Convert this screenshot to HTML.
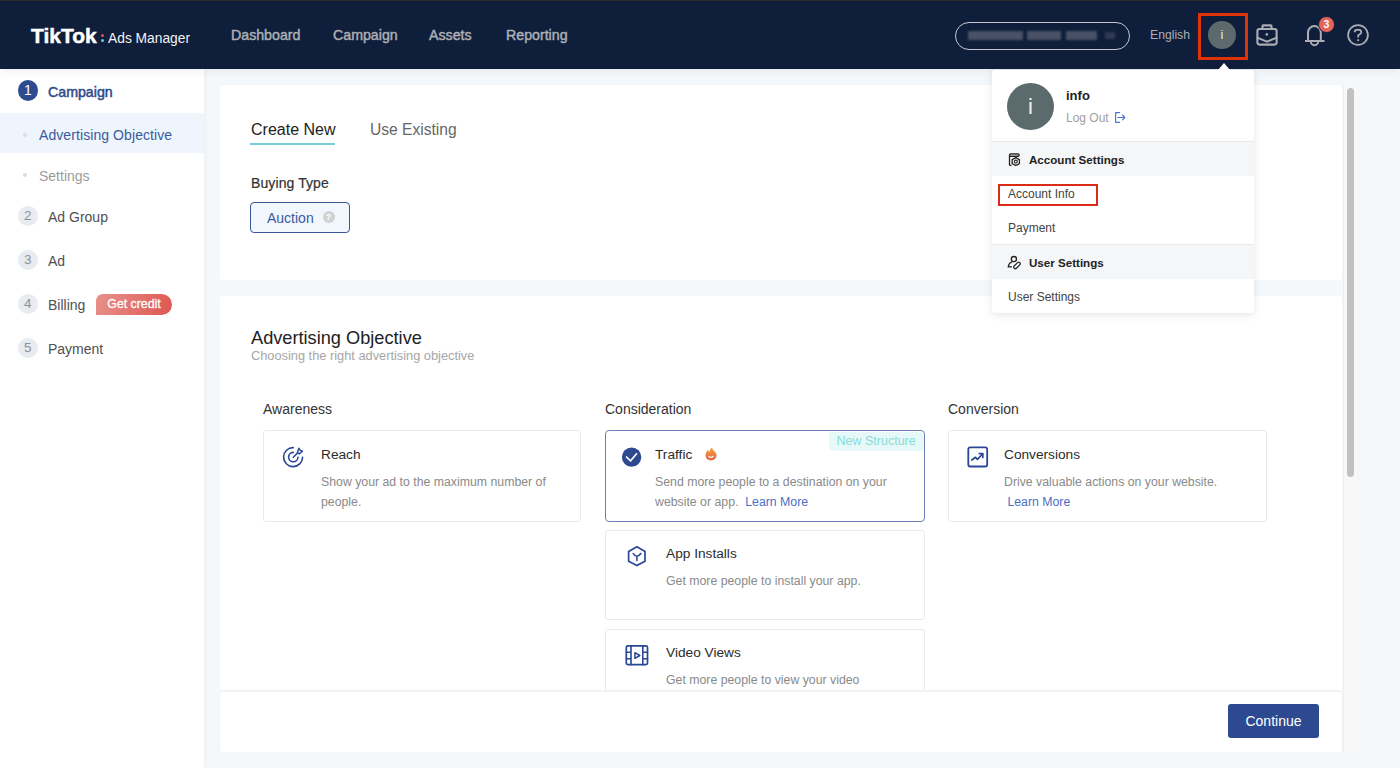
<!DOCTYPE html>
<html><head><meta charset="utf-8">
<style>
*{box-sizing:border-box;margin:0;padding:0}
html,body{width:1400px;height:768px;overflow:hidden}
body{font-family:"Liberation Sans",sans-serif;background:#f5f8fb;position:relative;color:#222}
.abs{position:absolute;white-space:nowrap}
#hdr{position:absolute;left:0;top:0;width:1400px;height:69px;background:#0f1e3b;border-top:1px solid #2b2b2b;z-index:5;box-shadow:0 2px 8px rgba(0,0,0,0.07)}
.logo{left:31px;top:23px;color:#fff;font-weight:bold;font-size:21px;letter-spacing:0px;-webkit-text-stroke:0.5px #fff}
.logo2{left:108px;top:30px;color:#f2f2f2;font-size:13.8px}
.nav{top:26px;color:#acafb5;font-size:14.2px;-webkit-text-stroke:0.45px #acafb5;letter-spacing:0px}
#side{left:0;top:69px;width:204px;height:699px;background:#fff;border-radius:0 0 4px 0;box-shadow:1px 0 5px rgba(0,0,0,0.04)}
.card{position:absolute;background:#fff;border-radius:4px}
.step{position:absolute;left:17.7px;width:20.3px;height:20.6px;border-radius:50%;background:#e8ebef;color:#8d9299;font-size:13.5px;text-align:center;line-height:20.6px;margin-top:-0.5px}
.stepl{position:absolute;left:48px;font-size:14px;color:#505050;margin-top:0.3px}
.dot{position:absolute;left:23px;width:4px;height:4px;border-radius:50%;background:#dcdcdc}
.obj{position:absolute;background:#fff;border:1px solid #e6e9ef;border-radius:3px}
.ot{position:absolute;font-size:13.7px;color:#2b2b2b}
.od{position:absolute;font-size:12.3px;color:#8a8a8a;line-height:19.5px;white-space:normal}
.lm{color:#4b6fc4}
.dd{position:absolute;font-size:12px;color:#444;white-space:nowrap}
</style></head><body>
<div id="hdr">
  <div class="abs logo">TikTok</div>
  <div class="abs" style="left:101px;top:33px;width:3px;height:3px;border-radius:2px;background:#ef4a5e"></div>
  <div class="abs" style="left:101px;top:38px;width:3px;height:3px;border-radius:2px;background:#4fd6e2"></div>
  <div class="abs logo2">Ads Manager</div>
  <div class="abs nav" style="left:231px">Dashboard</div>
  <div class="abs nav" style="left:333px">Campaign</div>
  <div class="abs nav" style="left:429px">Assets</div>
  <div class="abs nav" style="left:506px">Reporting</div>
  <!-- account pill -->
  <div class="abs" style="left:955px;top:21px;width:175px;height:28px;border:1.5px solid #c8c9d0;border-radius:14px"></div>
  <div class="abs" style="left:968px;top:30px;width:55px;height:9px;background:#485166;filter:blur(1px)"></div>
  <div class="abs" style="left:1027px;top:30px;width:34px;height:9px;background:#485166;filter:blur(1px)"></div>
  <div class="abs" style="left:1066px;top:30px;width:31px;height:9px;background:#485166;filter:blur(1px)"></div>
  <div class="abs" style="left:1105px;top:31px;width:10px;height:7px;background:#2f3a52;filter:blur(1px)"></div>
  <div class="abs" style="left:1150px;top:27px;color:#acafb5;font-size:12.2px">English</div>
  <!-- avatar -->
  <div class="abs" style="left:1208px;top:20px;width:28px;height:28px;border-radius:50%;background:#5d6a6d;color:#e8e8e8;font-size:13px;text-align:center;line-height:28px">i</div>
  <div class="abs" style="left:1197.5px;top:12.3px;width:50.3px;height:47px;border:3px solid #e03408"></div>
  <!-- briefcase -->
  <svg class="abs" style="left:1250px;top:18px" width="34" height="32" viewBox="1250 18 34 32" fill="none" stroke="#abadb2" stroke-width="2.1">
    <rect x="1257.4" y="28" width="19.2" height="15.6" rx="2"/>
    <path d="M1262.5 27.5V25Q1262.5 24.4 1263.2 24.4H1270.8Q1271.5 24.4 1271.5 25V27.5"/>
    <path d="M1256.6 36.4L1267 40.6L1277.4 36.4"/>
    <circle cx="1266.8" cy="33.4" r="1.3" fill="#abadb2" stroke="none"/>
  </svg>
  <!-- bell -->
  <svg class="abs" style="left:1300px;top:18px" width="30" height="32" viewBox="1300 18 30 32" fill="none" stroke="#abadb2" stroke-width="2">
    <path d="M1308 40V31.5A6.4 6.4 0 0 1 1320.8 31.5V40"/>
    <path d="M1314.4 25.2V24"/>
    <path d="M1305 40h19.5"/>
    <path d="M1310.8 40.5a3.7 3.7 0 0 0 7.4 0"/>
  </svg>
  <div class="abs" style="left:1318px;top:15px;width:17px;height:17px;border-radius:50%;background:#e4635a;border:1px solid #0f1e3b;color:#fff;font-size:10.5px;font-weight:bold;text-align:center;line-height:15px">3</div>
  <!-- help -->
  <svg class="abs" style="left:1345.9px;top:22px" width="24" height="24" viewBox="0 0 24 24" fill="none" stroke="#abadb2" stroke-width="1.75">
    <circle cx="12" cy="12" r="9.9"/>
    <path d="M8.6 9.3C8.6 7.6 10 6.7 11.9 6.7C13.8 6.7 15.3 7.7 15.3 9.3C15.3 11 13.6 11.4 12.2 12.3V14.5" stroke-linecap="butt"/>
    <rect x="11.2" y="16.3" width="1.9" height="1.8" fill="#abadb2" stroke="none"/>
  </svg>
</div>

<!-- sidebar -->
<div id="side" class="abs"></div>
<div class="step" style="top:80.5px;background:#2f4b8f;color:#fff;font-size:14px">1</div>
<div class="stepl" style="top:84px;color:#2e4a8c;font-size:14.2px;-webkit-text-stroke:0.5px #2e4a8c;letter-spacing:0px">Campaign</div>
<div class="abs" style="left:0;top:113px;width:204px;height:40px;background:#eef5fd"></div>
<div class="dot" style="top:133px"></div>
<div class="abs" style="left:39px;top:127px;font-size:14px;color:#3b5a9d;letter-spacing:0.08px">Advertising Objective</div>
<div class="dot" style="top:173px"></div>
<div class="abs" style="left:39px;top:168px;font-size:14px;color:#9c9c9c">Settings</div>
<div class="step" style="top:206px">2</div>
<div class="stepl" style="top:209px">Ad Group</div>
<div class="step" style="top:250px">3</div>
<div class="stepl" style="top:253px">Ad</div>
<div class="step" style="top:294px">4</div>
<div class="stepl" style="top:297px">Billing</div>
<div class="abs" style="left:96px;top:293.5px;width:76px;height:21.3px;border-radius:7px 11px 11px 0;background:linear-gradient(115deg,#e9928d,#dd5750);color:#fff;font-size:12.3px;-webkit-text-stroke:0.3px #fff;text-align:center;line-height:21px">Get credit</div>
<div class="step" style="top:338px">5</div>
<div class="stepl" style="top:341px">Payment</div>

<!-- card 1 -->
<div class="card" style="left:220px;top:85px;width:1122px;height:195px"></div>
<div class="abs" style="left:251px;top:121px;font-size:16px;color:#222">Create New</div>
<div class="abs" style="left:250px;top:143px;width:85px;height:2px;background:#78cdd6"></div>
<div class="abs" style="left:370px;top:121px;font-size:15.6px;color:#666">Use Existing</div>
<div class="abs" style="left:251px;top:175px;font-size:14px;color:#333;-webkit-text-stroke:0.2px #333;letter-spacing:0.1px">Buying Type</div>
<div class="abs" style="left:250px;top:202px;width:100px;height:31px;border:1px solid #3a5597;border-radius:4px;background:#f2f7fd"></div>
<div class="abs" style="left:267px;top:210px;font-size:14px;color:#3b5a9d">Auction</div>
<div class="abs" style="left:322.5px;top:211px;width:12px;height:12px;border-radius:50%;background:#d0d1d3;color:#fff;font-size:9.5px;font-weight:bold;text-align:center;line-height:12px">?</div>

<!-- card 2 -->
<div class="card" style="left:220px;top:296px;width:1122px;height:394px;border-radius:4px 4px 0 0"></div>
<div class="abs" style="left:251px;top:328px;font-size:18.2px;color:#222">Advertising Objective</div>
<div class="abs" style="left:251px;top:348px;font-size:12.8px;color:#a6a6a6">Choosing the right advertising objective</div>
<div class="abs" style="left:263px;top:401px;font-size:14px;color:#333">Awareness</div>
<div class="abs" style="left:605px;top:401px;font-size:14px;color:#333">Consideration</div>
<div class="abs" style="left:948px;top:401px;font-size:14px;color:#333">Conversion</div>

<div class="obj" style="left:263px;top:430px;width:318px;height:92px"></div>
<div class="ot" style="left:321px;top:447px">Reach</div>
<div class="od" style="left:321px;top:473px;width:240px">Show your ad to the maximum number of people.</div>

<div class="obj" style="left:604.5px;top:430px;width:320.5px;height:91.5px;border:1.5px solid #6d80b8;border-radius:4px"></div>
<div class="abs" style="left:829px;top:431.5px;width:95px;height:19px;background:#e7f8f8;border-radius:0 3px 0 5px;color:#88ddd9;font-size:12.5px;line-height:19px;padding-left:7.5px">New Structure</div>
<div class="ot" style="left:655px;top:447px">Traffic</div>
<div class="od" style="left:655px;top:473px;width:250px">Send more people to a destination on your website or app.&nbsp; <span class="lm">Learn More</span></div>

<div class="obj" style="left:605px;top:530px;width:320px;height:90px"></div>
<div class="ot" style="left:666px;top:546px">App Installs</div>
<div class="od" style="left:666px;top:572px;width:250px">Get more people to install your app.</div>

<div class="obj" style="left:605px;top:629px;width:320px;height:61px;border-bottom:none;border-radius:3px 3px 0 0"></div>
<div class="ot" style="left:666px;top:645px">Video Views</div>
<div class="od" style="left:666px;top:671px;width:250px">Get more people to view your video</div>

<div class="obj" style="left:948px;top:430px;width:319px;height:92px"></div>
<div class="ot" style="left:1004px;top:447px">Conversions</div>
<div class="od" style="left:1004px;top:473px;width:250px">Drive valuable actions on your website.<br>&nbsp;<span class="lm">Learn More</span></div>


<svg class="abs" style="left:0;top:0" width="1400" height="768" fill="none" stroke="#2a4797" stroke-width="1.6" stroke-linecap="round" stroke-linejoin="round">
  <!-- reach -->
  <path d="M293.3 447.6A9.5 9.5 0 1 0 302.6 457.2"/>
  <path d="M293.3 452.4A4.7 4.7 0 1 0 298 457.2"/>
  <path d="M293.3 457.2L297.8 452.7"/>
  <path d="M297.4 452.6L298.9 448.3L300.3 450.4L302.4 451.3L299.3 453.9Z" fill="#fff" stroke-width="1.5"/>
  <!-- check -->
  <circle cx="631.6" cy="457.1" r="9.7" fill="#2d4a90" stroke="none"/>
  <path d="M626.5 457l4.1 3.8l6-7" stroke="#fff" stroke-width="1.7"/>
  <!-- app installs -->
  <path d="M636.9 546.8L645 551.5V561.2L636.9 565.6L628.6 561.2V551.5Z" stroke-width="1.7"/>
  <path d="M633.2 553.5Q634.5 556 636.9 556.2Q639.3 556 640.8 553.5M636.9 556.2V560.4" stroke-width="1.6"/>
  <!-- video -->
  <rect x="626.3" y="645.8" width="21.2" height="18.9" rx="1.6" stroke-width="1.7"/>
  <path d="M631 645.8v18.9M642.8 645.8v18.9M626.3 652.2h4.7M626.3 658.8h4.7M642.8 652.2h4.7M642.8 658.8h4.7" stroke-width="1.6"/>
  <path d="M634.9 652.7L639.8 655.5L634.9 658.4Z" stroke-width="1.5"/>
  <!-- conversions -->
  <rect x="968.3" y="447.4" width="18.9" height="19.1" rx="2" stroke-width="1.8"/>
  <path d="M971.8 460L975.5 457.3L977.4 459.4L982.6 454" stroke-width="1.7"/>
  <path d="M978.6 453.7H982.8V458.2" stroke-width="1.7" stroke-linecap="butt"/>
</svg>
<svg class="abs" style="left:704px;top:446px" width="14" height="16" viewBox="0 0 14 16">
  <defs><linearGradient id="fg" x1="0" y1="0" x2="0" y2="1"><stop offset="0" stop-color="#f3a531"/><stop offset="1" stop-color="#e8624c"/></linearGradient></defs>
  <path d="M7 14.5C3.8 14.5 1.5 12.3 1.5 9.3C1.5 6.8 3 5 4.2 3.8C4.3 5 4.8 5.8 5.5 6.2C5.5 4.2 6.5 2.3 8.2 1.5C8.2 3 9 4 10.2 5C11.5 6.1 12.5 7.5 12.5 9.3C12.5 12.3 10.2 14.5 7 14.5Z" fill="url(#fg)"/>
  <path d="M4.8 10.3Q7 12.3 9.2 10.3" stroke="#fff" stroke-width="1.1" fill="none" stroke-linecap="round"/>
</svg>

<!-- footer -->
<div class="abs" style="left:220px;top:692px;width:1122px;height:60px;background:#fff;border-radius:4px;box-shadow:0 -1px 3px rgba(0,0,0,0.04)"></div>
<div class="abs" style="left:1228px;top:704px;width:91px;height:34px;border-radius:3px;background:#2d4a90;color:#fff;font-size:14px;text-align:center;line-height:34px">Continue</div>

<!-- scrollbar -->
<div class="abs" style="left:1343px;top:85px;width:13px;height:667px;background:#f8f8f9;border-left:1px solid #eeeeee"></div>
<div class="abs" style="left:1347px;top:88px;width:7px;height:389px;border-radius:4px;background:#c1c1c1"></div>

<!-- dropdown -->
<div class="abs" style="left:992px;top:70px;width:262px;height:243px;background:#fff;border-radius:3px;box-shadow:0 2px 8px rgba(0,0,0,0.10);z-index:6">
</div>
<div class="abs" style="left:1218px;top:63px;width:0;height:0;border-left:6.5px solid transparent;border-right:6.5px solid transparent;border-bottom:7px solid #fff;z-index:7"></div>
<div style="position:absolute;left:0;top:0;z-index:8">
  <div class="abs" style="left:1007px;top:83px;width:47px;height:47px;border-radius:50%;background:#5b6a6c;color:#eee;font-size:22px;text-align:center;line-height:47px">i</div>
  <div class="abs" style="left:1066px;top:88px;font-size:13px;font-weight:bold;color:#222">info</div>
  <div class="abs" style="left:1066px;top:111px;font-size:12px;color:#a0a0a0">Log Out</div>
  <svg class="abs" style="left:1108px;top:106px" width="24" height="22" viewBox="1108 106 24 22" fill="none" stroke="#4a72cf" stroke-width="1.15" stroke-linecap="round" stroke-linejoin="round">
    <path d="M1119.6 112.6H1115.6V122.3H1119.6"/><path d="M1117.9 117.5H1124.8M1122.5 115.2L1124.8 117.5L1122.5 119.9"/>
  </svg>
  <div class="abs" style="left:992px;top:141px;width:262px;height:35px;background:#f5f6f8;border-top:1px solid #e8e9ec"></div>
  <svg class="abs" style="left:1000px;top:145px" width="30" height="30" viewBox="1000 145 30 30" fill="none" stroke="#222" stroke-width="1.3">
    <path d="M1009.5 165V155Q1009.5 153.9 1010.6 153.9H1018Q1019.1 153.9 1019.1 155V155.3Q1019.1 156.4 1018 156.4H1009.5" fill="#bbb"/>
    <path d="M1009.5 165Q1009.5 165.3 1010.5 165.3H1011.5"/>
    <path d="M1015.8 157.6L1019.4 159.6V163.6L1015.8 165.6L1012.2 163.6V159.6Z" fill="#fff"/>
    <circle cx="1015.8" cy="161.6" r="1.5" stroke-width="1.1"/>
  </svg>
  <div class="abs" style="left:1029px;top:153px;font-size:11.6px;font-weight:bold;color:#222">Account Settings</div>
  <div class="dd" style="left:1008px;top:187px">Account Info</div>
  <div class="abs" style="left:998px;top:184px;width:100px;height:22px;border:2.5px solid #d92b16"></div>
  <div class="dd" style="left:1008px;top:221px">Payment</div>
  <div class="abs" style="left:992px;top:244px;width:262px;height:35px;background:#f5f6f8;border-top:1px solid #e8e9ec"></div>
  <svg class="abs" style="left:1000px;top:248px" width="30" height="30" viewBox="1000 248 30 30" fill="none" stroke="#222" stroke-width="1.3" stroke-linecap="round">
    <circle cx="1013.9" cy="259.1" r="2.6"/>
    <path d="M1011.8 262Q1008.6 263.2 1008.3 266.9H1011.4"/>
    <rect x="1013.1" y="263.8" width="7.8" height="3.2" rx="1.5" transform="rotate(-45 1017 265.4)" stroke-width="1.2"/>
  </svg>
  <div class="abs" style="left:1029px;top:256px;font-size:11.6px;font-weight:bold;color:#222">User Settings</div>
  <div class="dd" style="left:1008px;top:290px">User Settings</div>
</div>
</body></html>
